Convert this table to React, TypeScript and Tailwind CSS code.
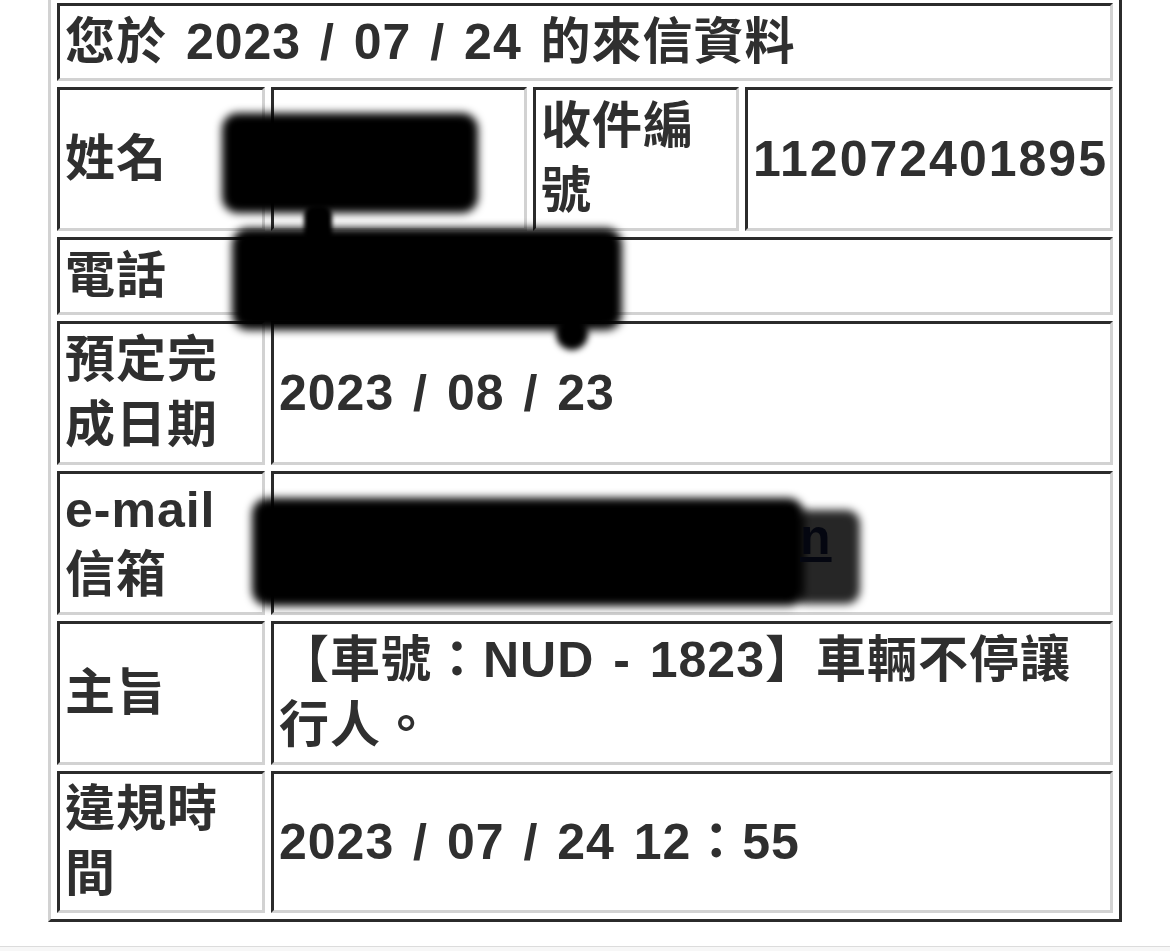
import React from 'react';

const cell =
  'flex items-center px-[5px] border-[3px] border-t-[#2b2b2b] border-l-[#2b2b2b] border-b-[#d2d2d2] border-r-[#d2d2d2] bg-white';

function Row({ label, children }: { label: React.ReactNode; children: React.ReactNode }) {
  return (
    <>
      <div className={cell}>
        <div>{label}</div>
      </div>
      <div className={`${cell} col-span-3`}>
        <div>{children}</div>
      </div>
    </>
  );
}

export default function App() {
  return (
    <div className="relative h-[951px] w-[1170px] overflow-hidden bg-white font-['Liberation_Sans','Noto_Sans_CJK_TC',sans-serif] text-[50px] font-bold leading-[65px] tracking-[1px] text-[#2f2f2f] [word-spacing:4px]">
      <div className="pl-[48px]">
        <div className="mt-[-6px] grid w-[1074px] grid-cols-[208px_256px_206px_368px] grid-rows-[78px_144px_78px_144px_144px_144px_142px] gap-[6px] border-[3px] border-t-[#d2d2d2] border-l-[#d2d2d2] border-b-[#2b2b2b] border-r-[#2b2b2b] p-[6px]">
          <div className={`${cell} col-span-4`}>
            <div>您於 2023 / 07 / 24 的來信資料</div>
          </div>

          <div className={cell}>
            <div>姓名</div>
          </div>
          <div className={cell} />
          <div className={cell}>
            <div>收件編號</div>
          </div>
          <div className={cell}>
            <div className="tracking-[2px]">112072401895</div>
          </div>

          <Row label="電話">
            <span className="text-[#cfcfcf]">0</span>
          </Row>
          <Row label="預定完成日期">2023 / 08 / 23</Row>
          <Row
            label={
              <>
                e-mail
                <br />
                信箱
              </>
            }
          >
            <span />
          </Row>
          <Row label="主旨">
            【車號：NUD - 1823】車輛不停讓
            <br />
            行人。
          </Row>
          <Row label="違規時間">2023 / 07 / 24 12：55</Row>
        </div>
      </div>

      {/* bottom separator */}
      <div className="absolute left-0 right-0 top-[946px] h-[5px] border-t border-[#dcdcdc] bg-[#f7f7f7]" />

      {/* redaction marks */}
      <div className="absolute left-[222px] top-[113px] h-[100px] w-[256px] rounded-[16px] bg-black blur-[4px]" />
      <div className="absolute left-[304px] top-[205px] h-[34px] w-[28px] rounded-t-[10px] bg-black blur-[2px]" />
      <div className="absolute left-[232px] top-[228px] h-[102px] w-[390px] rounded-[16px] bg-black blur-[4px]" />
      <div className="absolute left-[556px] top-[316px] h-[34px] w-[32px] rounded-full bg-black blur-[3px]" />
      <div className="absolute left-[252px] top-[498px] h-[108px] w-[552px] rounded-[16px] bg-black blur-[4px]" />
      <div className="absolute left-[800px] top-[505px] text-[#1d2b6b] underline">n</div>
      <div className="absolute left-[792px] top-[510px] h-[94px] w-[68px] rounded-[14px] bg-black/85 blur-[4px]" />
    </div>
  );
}
